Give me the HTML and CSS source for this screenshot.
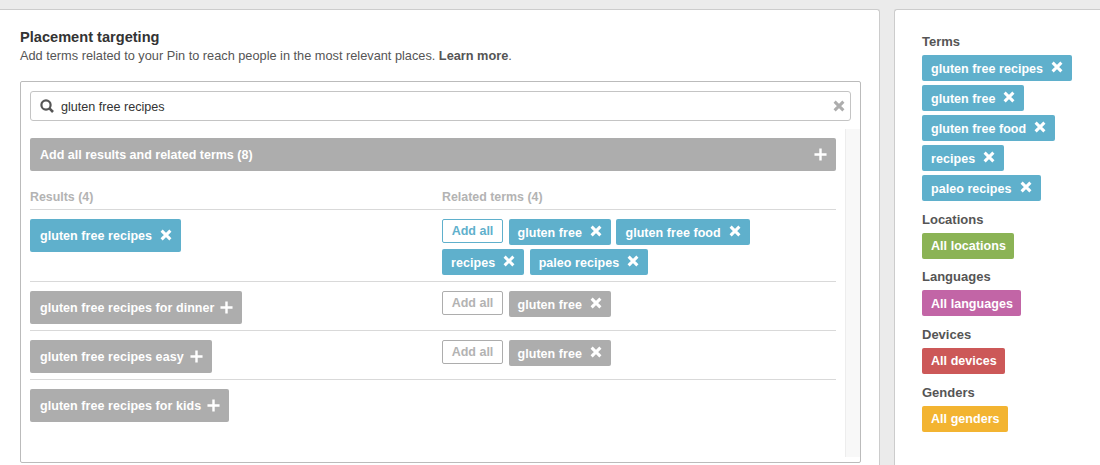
FILE: index.html
```html
<!DOCTYPE html>
<html lang="en">
<head>
<meta charset="utf-8">
<title>Placement targeting</title>
<link rel="stylesheet" href="styles.css">
</head>
<body>
<svg class="sprite" aria-hidden="true">
  <symbol id="x" viewBox="0 0 12 12"><path d="M1.6 1.6l8.8 8.8M10.4 1.6l-8.8 8.8" fill="none" stroke="currentColor" stroke-width="3"/></symbol>
  <symbol id="plus" viewBox="0 0 14 14"><path d="M7 .5v13M.5 7h13" fill="none" stroke="currentColor" stroke-width="2.6"/></symbol>
  <symbol id="search" viewBox="0 0 14 14"><circle cx="6" cy="6" r="4.6" fill="none" stroke="currentColor" stroke-width="2.2"/><path d="M9.2 9.2l3.8 3.8" fill="none" stroke="currentColor" stroke-width="2.6"/></symbol>
</svg>
<div class="page">
  <main class="main">
    <h1 class="title">Placement targeting</h1>
    <p class="sub">Add terms related to your Pin to reach people in the most relevant places. <b>Learn more</b>.</p>
    <section class="box">
      <div class="search">
        <svg class="search-ico"><use href="#search"/></svg>
        <span class="search-text">gluten free recipes</span>
        <svg class="clear-ico"><use href="#x"/></svg>
      </div>
      <div class="scroller">
        <div class="list">
          <div class="addbar"><span>Add all results and related terms (8)</span><svg class="plus plus-bar"><use href="#plus"/></svg></div>
          <div class="cols head">
            <div class="col-l">Results (4)</div>
            <div class="col-r">Related terms (4)</div>
          </div>
          <div class="cols row">
            <div class="col-l"><span class="tag big blue">gluten free recipes<svg class="xi"><use href="#x"/></svg></span></div>
            <div class="col-r tags">
              <span class="addall on">Add all</span>
              <span class="tag blue">gluten free<svg class="xi"><use href="#x"/></svg></span>
              <span class="tag blue">gluten free food<svg class="xi"><use href="#x"/></svg></span>
              <span class="tag blue">recipes<svg class="xi"><use href="#x"/></svg></span>
              <span class="tag blue">paleo recipes<svg class="xi"><use href="#x"/></svg></span>
            </div>
          </div>
          <div class="cols row">
            <div class="col-l"><span class="tag big gray">gluten free recipes for dinner<svg class="plus"><use href="#plus"/></svg></span></div>
            <div class="col-r tags">
              <span class="addall">Add all</span>
              <span class="tag gray">gluten free<svg class="xi"><use href="#x"/></svg></span>
            </div>
          </div>
          <div class="cols row">
            <div class="col-l"><span class="tag big gray">gluten free recipes easy<svg class="plus"><use href="#plus"/></svg></span></div>
            <div class="col-r tags">
              <span class="addall">Add all</span>
              <span class="tag gray">gluten free<svg class="xi"><use href="#x"/></svg></span>
            </div>
          </div>
          <div class="cols row last">
            <div class="col-l"><span class="tag big gray">gluten free recipes for kids<svg class="plus"><use href="#plus"/></svg></span></div>
          </div>
        </div>
        <div class="track"></div>
      </div>
    </section>
  </main>
  <aside class="side">
    <h2 class="label first">Terms</h2>
    <div class="stack">
      <span class="tag blue">gluten free recipes<svg class="xi"><use href="#x"/></svg></span>
      <span class="tag blue">gluten free<svg class="xi"><use href="#x"/></svg></span>
      <span class="tag blue">gluten free food<svg class="xi"><use href="#x"/></svg></span>
      <span class="tag blue">recipes<svg class="xi"><use href="#x"/></svg></span>
      <span class="tag blue">paleo recipes<svg class="xi"><use href="#x"/></svg></span>
    </div>
    <h2 class="label">Locations</h2>
    <div class="stack"><span class="tag plain green">All locations</span></div>
    <h2 class="label">Languages</h2>
    <div class="stack"><span class="tag plain pink">All languages</span></div>
    <h2 class="label">Devices</h2>
    <div class="stack"><span class="tag plain red">All devices</span></div>
    <h2 class="label">Genders</h2>
    <div class="stack"><span class="tag plain yellow">All genders</span></div>
  </aside>
</div>
</body>
</html>
```
FILE: styles.css
```css
* { box-sizing: border-box; }
html, body { margin: 0; height: 465px; overflow: hidden; }
body {
  background: #ebebeb;
  font-family: "Liberation Sans", Arial, sans-serif;
  font-size: 13px;
  color: #444;
}
.sprite { display: none; }
.page { display: flex; gap: 14px; padding-top: 9px; height: 465px; }
.main {
  width: 880px;
  background: #fff;
  border: 1px solid #ccc;
  border-width: 1px 1px 0 0;
  border-top-right-radius: 3px;
  padding: 18px 18px 0 20px;
}
.title { margin: 0; font-size: 14.6px; line-height: 18px; font-weight: bold; color: #333; }
.sub { margin: 2px 0 0; font-size: 12.75px; line-height: 16px; color: #555; }
.sub b { color: #555; }
.box {
  margin-top: 17px;
  width: 841px;
  height: 382px;
  border: 1px solid #bbb;
  border-radius: 2px;
  padding: 9px 0 5px 9px;
  display: flex;
  flex-direction: column;
}
.search {
  width: 821px;
  height: 30px;
  flex: none;
  border: 1px solid #c4c4c4;
  border-radius: 3px;
  display: flex;
  align-items: center;
  padding: 0 5px 0 9px;
  color: #333;
  font-size: 12.6px;
}
.search-ico { width: 14px; height: 14px; color: #555; }
.search-text { margin-left: 7px; flex: 1; padding-top: 1px; }
.clear-ico { width: 12px; height: 12px; color: #adadad; }
.scroller { flex: 1; margin-top: 8px; display: flex; gap: 9px; min-height: 0; }
.list { width: 806px; padding-top: 9px; }
.track {
  width: 15px;
  background: #f8f8f8;
  border-left: 1px solid #ededed;
}
.addbar {
  height: 33px;
  background: #adadad;
  border-radius: 2px;
  color: #fff;
  font-weight: bold;
  font-size: 12.5px;
  display: flex;
  align-items: center;
  justify-content: space-between;
  padding: 0 9px 0 10px;
}
.cols { display: flex; border-bottom: 1px solid #d9d9d9; }
.col-l { width: 412px; flex: none; }
.col-r { flex: 1; min-width: 0; }
.head {
  height: 39px;
  padding-top: 18px;
  color: #b3b3b3;
  font-weight: bold;
  font-size: 12.4px;
  line-height: 16px;
}
.row { padding: 9px 0 6px; }
.row.last { border-bottom: 0; }
.tags { display: flex; flex-wrap: wrap; gap: 4px 5.5px; align-items: flex-start; padding-right: 10px; }
.tag {
  display: inline-flex;
  align-items: center;
  height: 26px;
  padding: 1px 9px 0;
  border-radius: 2px;
  color: #fff;
  font-weight: bold;
  font-size: 12.5px;
  letter-spacing: .05px;
  white-space: nowrap;
}
.tag.big { height: 33px; padding: 0 9px 0 10px; }
.tag.plain { padding-right: 8.5px; }
.blue { background: #5fb0cc; }
.gray { background: #adadad; }
.green { background: #8bb355; }
.pink { background: #c265a6; }
.red { background: #cc5858; }
.yellow { background: #f3b431; }
.xi { width: 12px; height: 12px; margin-left: 8px; margin-top: -3px; flex: none; }
.big .xi { margin-top: -2px; }
.plus { width: 13px; height: 13px; margin-left: 6px; margin-top: -1px; flex: none; }
.plus-bar { margin: 0; color: #fff; }
.addall {
  width: 61px;
  height: 24px;
  border: 1px solid #adadad;
  border-radius: 2px;
  color: #b3b3b3;
  background: #fff;
  font-weight: bold;
  font-size: 12.5px;
  text-align: center;
  line-height: 23px;
}
.addall.on { border-color: #5fb0cc; color: #5fb0cc; }
.side {
  flex: 1;
  background: #fff;
  border: 1px solid #ccc;
  border-width: 1px 0 0 1px;
  border-top-left-radius: 3px;
  padding: 24px 0 0 27px;
}
.label {
  margin: 10.67px 0 6px;
  font-size: 13px;
  line-height: 15px;
  font-weight: bold;
  color: #555;
}
.label.first { margin-top: 0; }
.stack { display: flex; flex-direction: column; align-items: flex-start; gap: 4px; }
```
